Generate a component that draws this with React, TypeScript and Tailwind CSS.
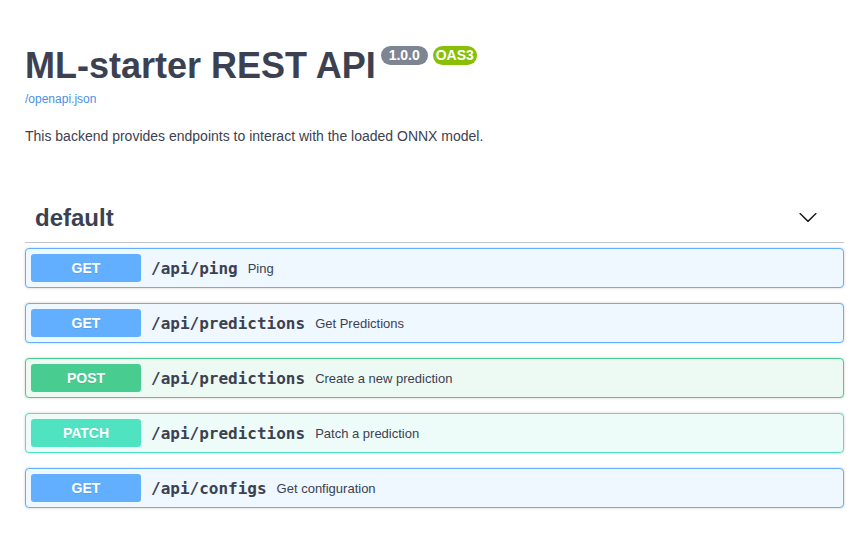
import React from 'react';

type Op = {
  method: 'GET' | 'POST' | 'PATCH';
  path: string;
  summary: string;
};

const ops: Op[] = [
  { method: 'GET', path: '/api/ping', summary: 'Ping' },
  { method: 'GET', path: '/api/predictions', summary: 'Get Predictions' },
  { method: 'POST', path: '/api/predictions', summary: 'Create a new prediction' },
  { method: 'PATCH', path: '/api/predictions', summary: 'Patch a prediction' },
  { method: 'GET', path: '/api/configs', summary: 'Get configuration' },
];

const styles = {
  GET: { block: 'border-[#61affe] bg-[#eff7ff]', label: 'bg-[#61affe]' },
  POST: { block: 'border-[#49cc90] bg-[#edfaf4]', label: 'bg-[#49cc90]' },
  PATCH: { block: 'border-[#50e3c2] bg-[#eefcf9]', label: 'bg-[#50e3c2]' },
};

const OpBlock: React.FC<{ op: Op }> = ({ op }) => {
  const s = styles[op.method];
  return (
    <div
      className={`mb-[15px] flex h-[40px] items-center rounded-[4px] border p-[5px] shadow-[0_0_3px_rgba(0,0,0,0.19)] ${s.block}`}
    >
      <span
        className={`flex h-[28px] w-[110px] shrink-0 items-center justify-center rounded-[3px] pt-[1px] text-[14px] font-bold text-white [text-shadow:0_1px_0_rgba(0,0,0,0.1)] ${s.label}`}
      >
        {op.method}
      </span>
      <span className="px-[10px] pt-[1px] font-['DejaVu_Sans_Mono',monospace] text-[16px] font-bold text-[#3b4151]">
        {op.path}
      </span>
      <span className="pt-[2px] text-[13px] text-[#3b4151]">{op.summary}</span>
    </div>
  );
};

export default function App() {
  return (
    <div className="min-h-[540px] bg-white pl-[25px] pr-[24px] pt-[48px] font-['Liberation_Sans',Arial,sans-serif] text-[#3b4151]">
      {/* Info */}
      <div className="flex items-start">
        <h1 className="text-[36px] font-bold leading-[36px] text-[#3b4151]">ML-starter REST API</h1>
        <div className="ml-[5px] mt-[-2px] flex gap-[5px]">
          <span className="flex h-[19px] w-[47px] items-center justify-center rounded-full bg-[#7d8492] text-[14px] font-bold text-white">
            1.0.0
          </span>
          <span className="flex h-[19px] w-[44px] items-center justify-center rounded-full bg-[#89bf04] text-[14px] font-bold text-white">
            OAS3
          </span>
        </div>
      </div>
      <a href="#" className="mt-[8px] block text-[12px] leading-[14px] text-[#4990e2]">
        /openapi.json
      </a>
      <p className="mt-[20px] text-[14px] leading-[20px]">
        This backend provides endpoints to interact with the loaded ONNX model.
      </p>

      {/* Tag section */}
      <div className="mt-[46px]">
        <div className="mb-[5px] flex h-[51px] items-center justify-between border-b border-[#c4c6cb] pl-[10px] pr-[26px]">
          <h3 className="mt-[2px] text-[24px] font-bold leading-[30px] text-[#3b4151]">default</h3>
          <svg width="20" height="20" viewBox="0 0 20 20" className="fill-[#1b1b1b]">
            <path d="M17.418 6.109c.272-.268.709-.268.979 0s.271.701 0 .969l-7.908 7.83c-.27.268-.707.268-.979 0l-7.908-7.83c-.27-.268-.27-.701 0-.969.271-.268.709-.268.979 0L10 13.25l7.418-7.141z" />
          </svg>
        </div>
        {ops.map((op, i) => (
          <OpBlock key={i} op={op} />
        ))}
      </div>
    </div>
  );
}
